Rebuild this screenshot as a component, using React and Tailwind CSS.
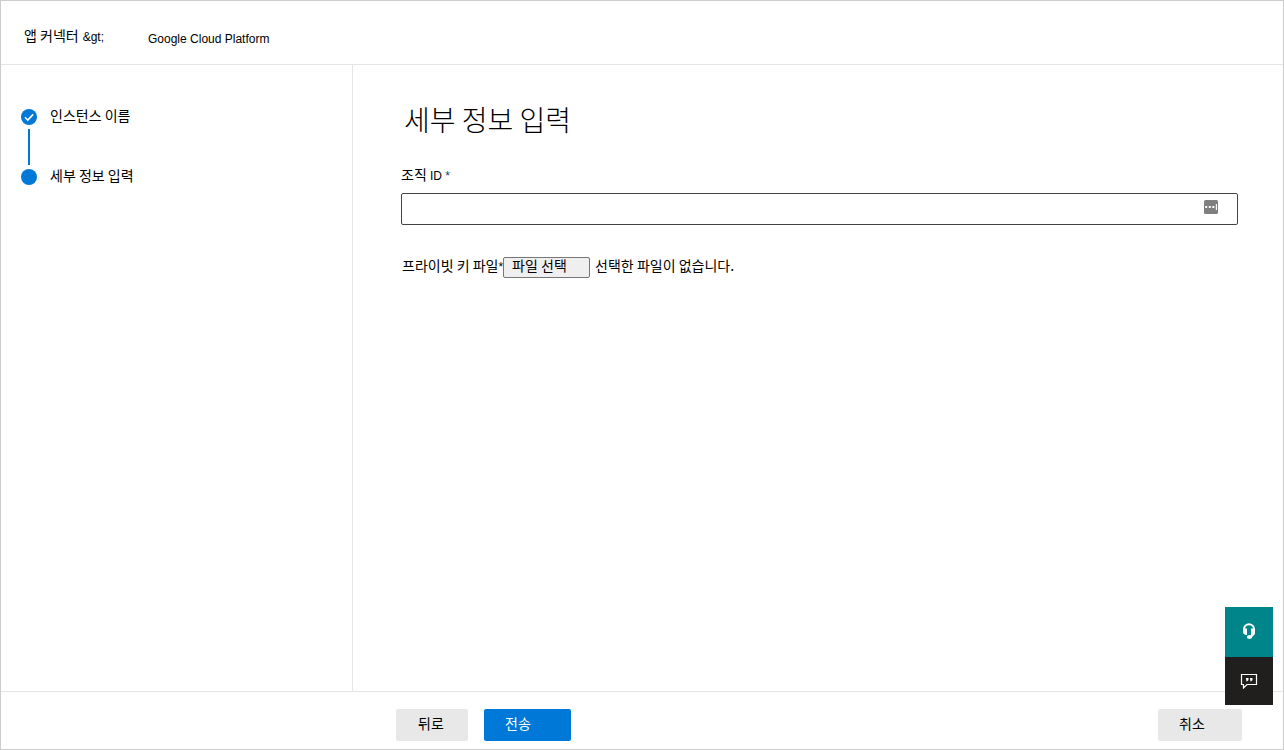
import { useRef, useState } from 'react';

const steps = [
  { label: '인스턴스 이름', done: true },
  { label: '세부 정보 입력', done: false },
];

function StepDot({ done }) {
  return (
    <svg viewBox="0 0 16 16" className="w-4 h-4 shrink-0" aria-hidden="true">
      <circle cx="8" cy="8" r="8" fill="#0078d7" />
      {done && <path d="M4 8.2 6.8 11 12.2 5.4" fill="none" stroke="#fff" strokeWidth="1.6" />}
    </svg>
  );
}

function HeadsetIcon() {
  return (
    <svg viewBox="0 0 14 16" className="w-3.5 h-4" aria-hidden="true">
      <path d="M2 8V6.2a5 5 0 0 1 10 0V9c0 2.5-1.5 4-4 4.7" fill="none" stroke="#fff" strokeWidth="2" />
      <path d="M1 5.5h4v6.500C2.500 12 1 11 1 9zM9 5.500h4V9c0 1.800-1 3-2.600 3H9z" fill="#fff" />
      <ellipse cx="7.500" cy="14" rx="2.700" ry="1.900" fill="#fff" />
    </svg>
  );
}

function FeedbackIcon() {
  return (
    <svg viewBox="0 0 18 16" className="w-[18px] h-4" aria-hidden="true">
      <path d="M1.5 1.5h15v10H7l-3.500 3.500v-3.500h-2z" fill="none" stroke="#fff" strokeWidth="1.2" />
      <path d="M6 5h2.500v2L7.300 8.200H6l.7-1.400H6zM10 5h2.500v2l-1.200 1.200H10l.7-1.400H10z" fill="#fff" />
    </svg>
  );
}

function PasswordIcon() {
  return (
    <svg viewBox="0 0 14 14" className="w-3.5 h-3.5" aria-hidden="true">
      <rect width="14" height="14" rx="1.5" fill="#7f7f7f" />
      <path d="M1.2 6h2v2h-2zM4.800 6h2v2h-2zM8.300 6h2v2h-2zM11.800 4H13v6h-1.200z" fill="#fff" />
    </svg>
  );
}

export default function App() {
  const fileInput = useRef(null);
  const [fileName, setFileName] = useState('');

  return (
    <div className="min-h-screen flex flex-col bg-white text-black text-sm font-['Noto_Sans_CJK_KR',sans-serif] border border-[#cccccc]">
      <header className="h-16 shrink-0 flex items-center px-[23px] pt-1 border-b border-[#e5e5e5]">
        <nav className="flex items-center gap-11" aria-label="breadcrumb">
          <a href="#connectors" className="flex items-baseline gap-1">
            앱 커넥터 <span className="text-xs font-['Liberation_Sans',sans-serif]">&amp;gt;</span>
          </a>
          <span className="pt-2 text-xs font-['Liberation_Sans',sans-serif]">Google Cloud Platform</span>
        </nav>
      </header>

      <div className="flex-1 flex">
        <aside className="w-[352px] shrink-0 pl-5 pt-10 border-r border-[#e5e5e5]">
          <ol className="flex flex-col">
            {steps.map((step, index) => (
              <li key={step.label}>
                {index > 0 && <div className="w-0.5 h-9 ml-[7px] bg-[#0078d7]" />}
                <div className="h-6 flex items-center gap-[13px]">
                  <StepDot done={step.done} />
                  <span className="pb-1 leading-5">{step.label}</span>
                </div>
              </li>
            ))}
          </ol>
        </aside>

        <main className="flex-1 pl-12 pr-[45px] pt-[34px]">
          <h1 className="pl-[3px] text-[28px] leading-10 font-light">세부 정보 입력</h1>

          <form className="mt-[25px]">
            <label htmlFor="org-id" className="block leading-5">
              조직 <span className="text-xs font-['Liberation_Sans',sans-serif]">ID <span className="text-[#004578]">*</span></span>
            </label>
            <div className="mt-[9px] h-8 flex items-center pr-[19px] border border-[#444444] rounded-xs">
              <input id="org-id" type="text" required className="flex-1 h-full px-2 outline-none" />
              <span className="pb-1"><PasswordIcon /></span>
            </div>

            <div className="mt-[30px] flex items-center">
              <label htmlFor="key-file" className="pl-px pb-1 leading-5">
                프라이빗 키 파일<span className="text-xs font-['Liberation_Sans',sans-serif]">*</span>
              </label>
              <input
                id="key-file"
                ref={fileInput}
                type="file"
                className="hidden"
                onChange={(e) => setFileName(e.target.files[0]?.name || '')}
              />
              <button
                type="button"
                onClick={() => fileInput.current.click()}
                className="w-[87px] h-[21px] pl-2 pb-1 flex items-center bg-[#efefef] border border-[#767676] rounded-xs"
              >
                파일 선택
              </button>
              <span className="pl-[5px] pb-1 leading-5">{fileName || '선택한 파일이 없습니다.'}</span>
            </div>
          </form>
        </main>
      </div>

      <footer className="shrink-0 flex items-center pl-[395px] pr-[41px] pt-[17px] pb-2 border-t border-[#e5e5e5]">
        <button type="button" className="w-[72px] h-8 pr-0.5 pb-1 bg-[#e8e8e8] rounded-xs">뒤로</button>
        <button type="button" className="w-[87px] h-8 ml-4 pl-[21px] pb-1 text-left text-white bg-[#0078d7] rounded-xs">전송</button>
        <button type="button" className="w-[84px] h-8 ml-auto pl-[21px] pb-1 text-left bg-[#e8e8e8] rounded-xs">취소</button>
      </footer>

      {/* Floating help and feedback */}
      <div className="fixed right-[11px] bottom-[45px] w-12 flex flex-col">
        <button type="button" aria-label="도움말" className="h-[50px] pb-0.5 flex items-center justify-center bg-[#00858a]">
          <HeadsetIcon />
        </button>
        <button type="button" aria-label="피드백" className="h-12 flex items-center justify-center bg-[#211f1e]">
          <FeedbackIcon />
        </button>
      </div>
    </div>
  );
}
